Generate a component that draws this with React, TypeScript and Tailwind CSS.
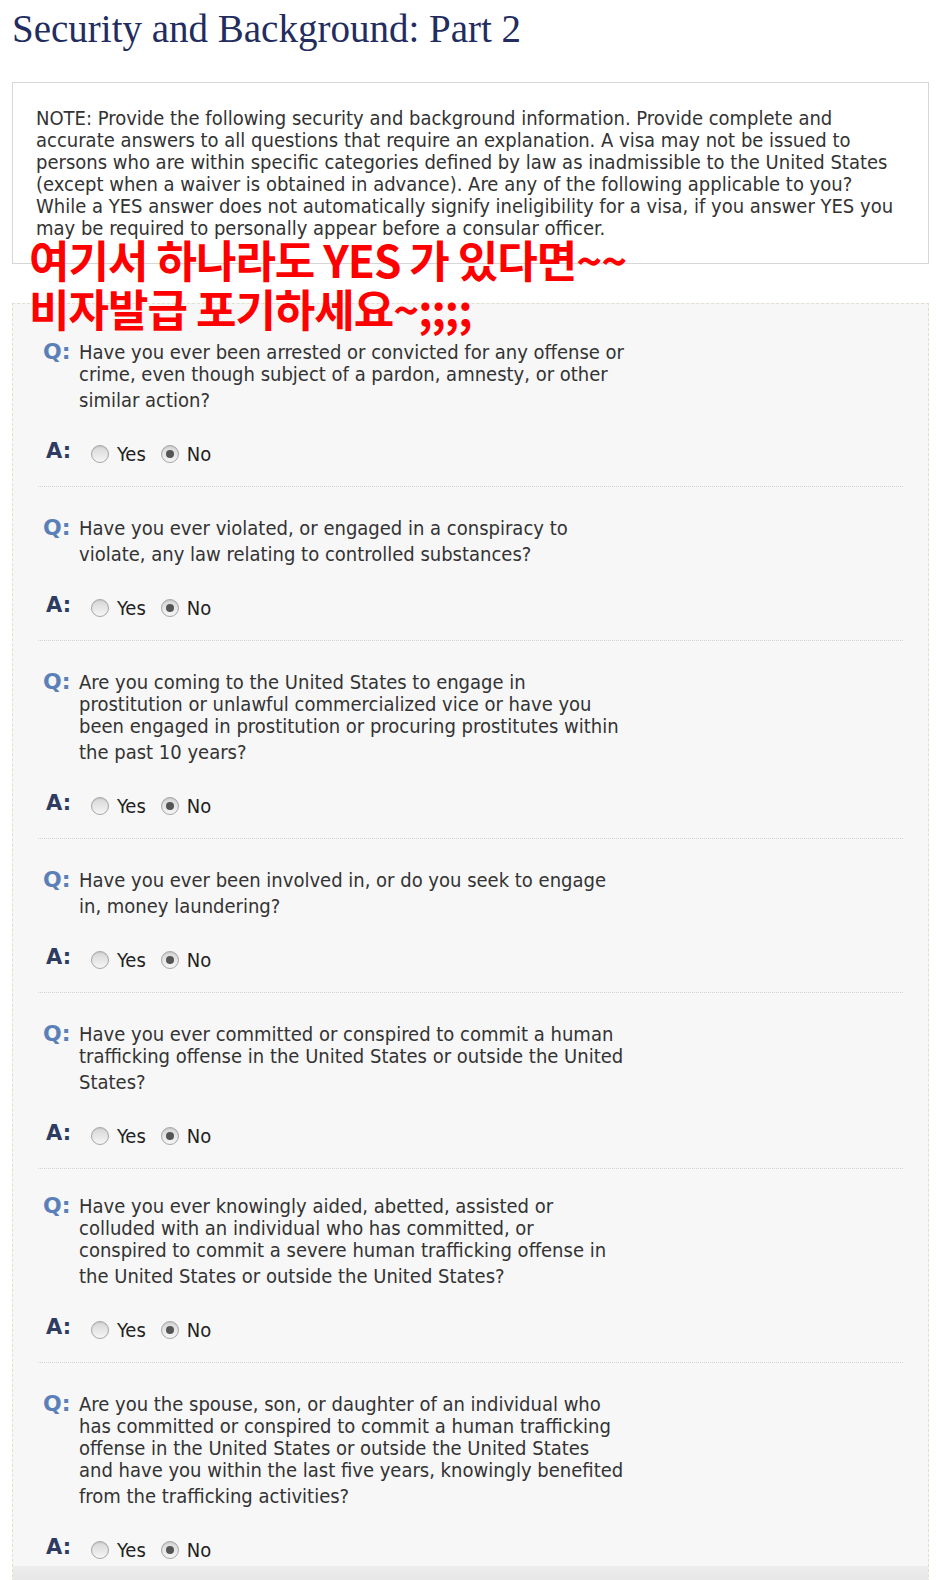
import React from "react";

const noteLines = [
  "NOTE: Provide the following security and background information. Provide complete and",
  "accurate answers to all questions that require an explanation. A visa may not be issued to",
  "persons who are within specific categories defined by law as inadmissible to the United States",
  "(except when a waiver is obtained in advance). Are any of the following applicable to you?",
  "While a YES answer does not automatically signify ineligibility for a visa, if you answer YES you",
  "may be required to personally appear before a consular officer.",
];

type Q = { lines: string[]; pt: string };

const questions: Q[] = [
  {
    pt: "pt-[30px]",
    lines: [
      "Have you ever been arrested or convicted for any offense or",
      "crime, even though subject of a pardon, amnesty, or other",
      "similar action?",
    ],
  },
  {
    pt: "pt-[30px]",
    lines: [
      "Have you ever violated, or engaged in a conspiracy to",
      "violate, any law relating to controlled substances?",
    ],
  },
  {
    pt: "pt-[30px]",
    lines: [
      "Are you coming to the United States to engage in",
      "prostitution or unlawful commercialized vice or have you",
      "been engaged in prostitution or procuring prostitutes within",
      "the past 10 years?",
    ],
  },
  {
    pt: "pt-[30px]",
    lines: [
      "Have you ever been involved in, or do you seek to engage",
      "in, money laundering?",
    ],
  },
  {
    pt: "pt-[30px]",
    lines: [
      "Have you ever committed or conspired to commit a human",
      "trafficking offense in the United States or outside the United",
      "States?",
    ],
  },
  {
    pt: "pt-[26px]",
    lines: [
      "Have you ever knowingly aided, abetted, assisted or",
      "colluded with an individual who has committed, or",
      "conspired to commit a severe human trafficking offense in",
      "the United States or outside the United States?",
    ],
  },
  {
    pt: "pt-[30px]",
    lines: [
      "Are you the spouse, son, or daughter of an individual who",
      "has committed or conspired to commit a human trafficking",
      "offense in the United States or outside the United States",
      "and have you within the last five years, knowingly benefited",
      "from the trafficking activities?",
    ],
  },
];

function Radio({ checked }: { checked?: boolean }) {
  return (
    <span className="flex h-[18px] w-[18px] items-center justify-center rounded-full border border-[#a6a6a6] bg-linear-to-b from-[#d6d6d6] to-[#f6f6f6] shadow-[inset_0_1px_1px_rgba(0,0,0,0.08)]">
      {checked ? <span className="h-[8px] w-[8px] rounded-full bg-[#555555]" /> : null}
    </span>
  );
}

function QuestionBlock({ q, last }: { q: Q; last: boolean }) {
  return (
    <div
      className={
        "mx-[25px] " +
        q.pt +
        (last ? " pb-[4px]" : " border-b border-dotted border-[#d4d4d4] pb-[20px]")
      }
    >
      <div className="flex">
        <div className="w-[41px] shrink-0 pl-[5px] font-['DejaVu_Sans',sans-serif] text-[22px] font-bold leading-[22px] text-[#5b80b9]">
          Q:
        </div>
        <div className="text-[#333333]">
          {q.lines.map((l, i) => (
            <div
              key={i}
              className={
                "leading-[22px] whitespace-nowrap" +
                (i === q.lines.length - 1 && q.lines.length > 1 ? " mt-[4px]" : "")
              }
            >
              {l}
            </div>
          ))}
        </div>
      </div>
      <div className="mt-[31px] flex h-[24px] items-center">
        <div className="w-[53px] shrink-0 -translate-y-[3px] pl-[8px] font-['DejaVu_Sans',sans-serif] text-[21px] font-bold leading-[22px] text-[#2f3c62]">
          A:
        </div>
        <Radio />
        <span className="ml-[8px] mr-[15px] text-[#222222]">Yes</span>
        <Radio checked />
        <span className="ml-[8px] text-[#222222]">No</span>
      </div>
    </div>
  );
}

export default function App() {
  return (
    <div className="relative min-h-[1580px] w-[936px] overflow-hidden bg-white font-['DejaVu_Sans_Condensed','DejaVu_Sans',sans-serif] text-[20px]">
      <h1 className="ml-[12px] pt-[9px] font-['Liberation_Serif','Times_New_Roman',serif] text-[39px] font-normal leading-none text-[#232c5e]">
        Security and Background: Part 2
      </h1>

      <div className="ml-[12px] mt-[34px] w-[917px] border border-[#d6d6d6] bg-white pb-[24px] pl-[23px] pt-[24px] text-[#333333]">
        {noteLines.map((l, i) => (
          <div key={i} className="whitespace-nowrap leading-[22px]">
            {l}
          </div>
        ))}
      </div>

      <div className="ml-[12px] mt-[39px] w-[917px] border border-dashed border-[#e3dece] bg-[#f7f7f7] pt-[7px]">
        {questions.map((q, i) => (
          <QuestionBlock key={i} q={q} last={i === questions.length - 1} />
        ))}
        <div className="h-[20px] bg-linear-to-b from-[#eeeeee] to-[#e4e4e4]" />
      </div>

      <div className="absolute left-[29px] top-[235px] font-['Noto_Sans_CJK_KR','Malgun_Gothic',sans-serif] text-[44px] font-bold leading-[49px] tracking-[-1px] text-[#ff0000]">
        <div className="whitespace-nowrap">여기서 하나라도 YES 가 있다면~~</div>
        <div className="whitespace-nowrap">비자발급 포기하세요~;;;;</div>
      </div>
    </div>
  );
}
